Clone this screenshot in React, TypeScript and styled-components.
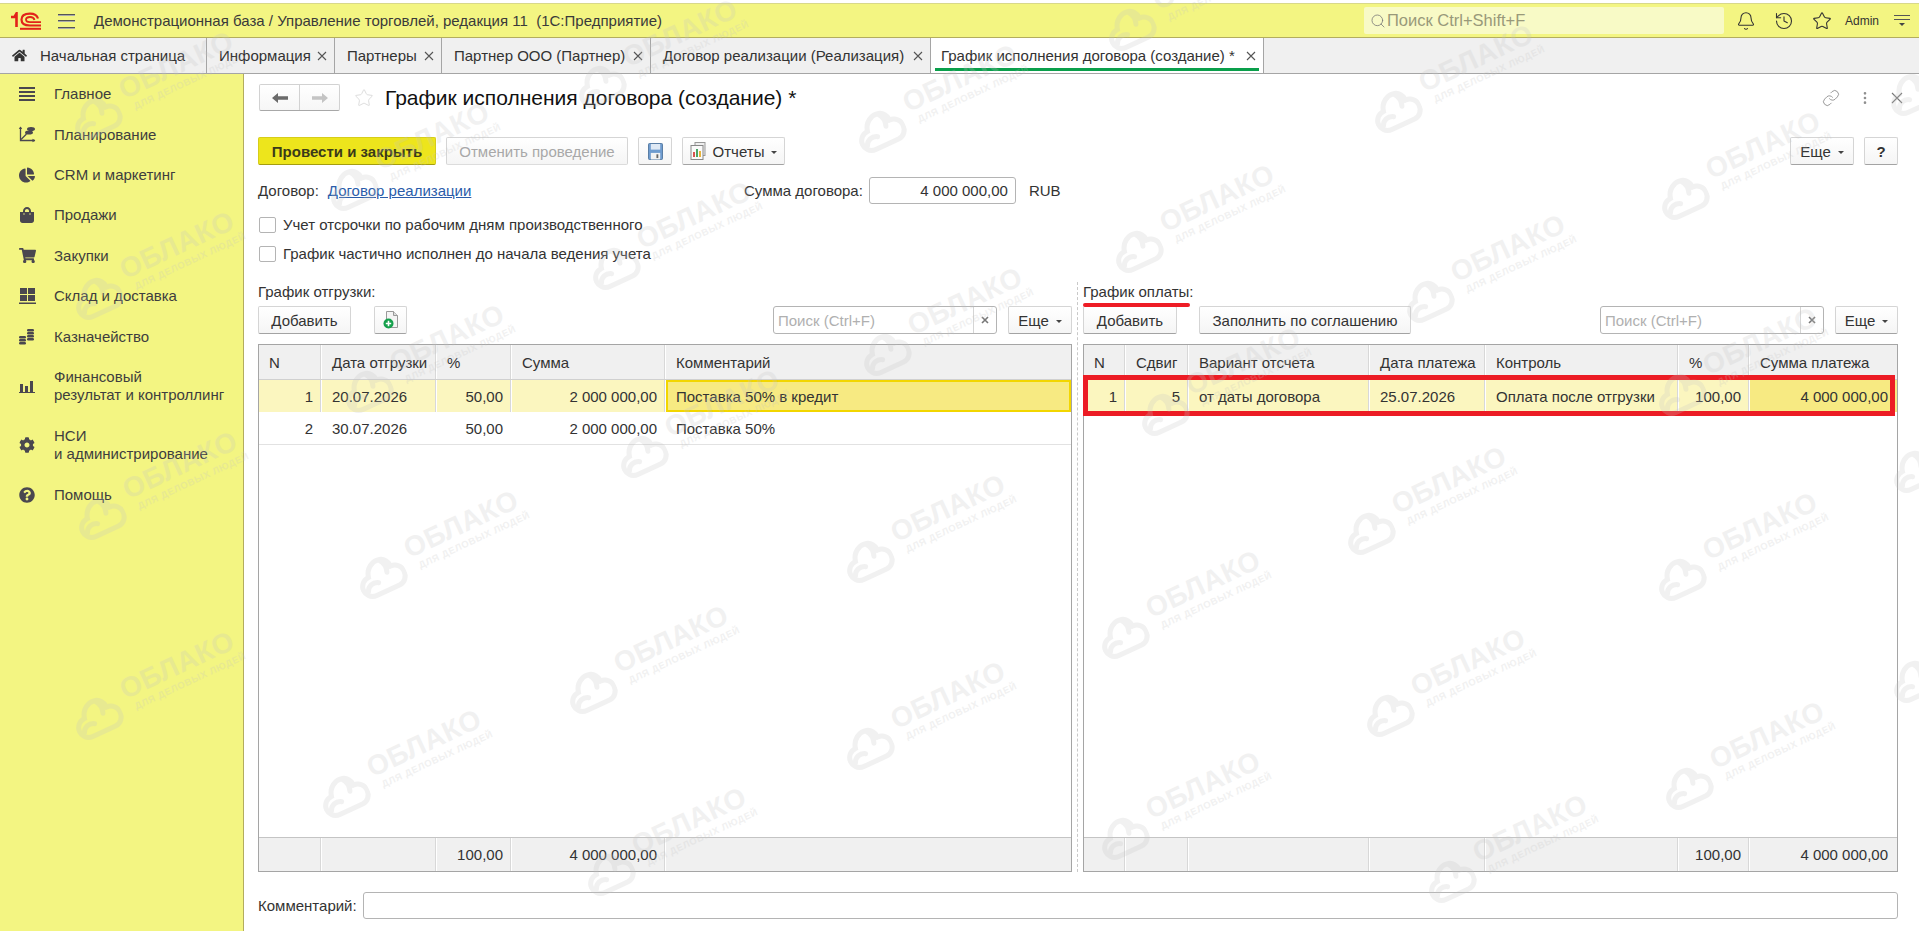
import React from "react";
import styled, { createGlobalStyle } from "styled-components";
import {
  Bell,
  EllipsisVertical,
  History,
  Link as LinkIcon,
  Search,
  Star,
} from "lucide-react";
import {
  FaChartPie,
  FaCog,
  FaHome,
  FaQuestionCircle,
  FaShoppingBag,
  FaShoppingCart,
} from "react-icons/fa";

const GlobalStyle = createGlobalStyle`
  html, body {
    margin: 0;
    padding: 0;
    background: #fff;
  }
  * {
    box-sizing: border-box;
  }
`;

const Page = styled.div`
  position: relative;
  width: 1919px;
  height: 931px;
  overflow: hidden;
  display: flex;
  flex-direction: column;
  background: #fff;
  color: #333;
  font-family: "Liberation Sans", Arial, sans-serif;
  font-size: 15px;
`;

const Header = styled.header`
  margin-top: 3px;
  height: 35px;
  flex: none;
  display: flex;
  align-items: center;
  background: #f3f582;
  border-top: 1px solid #d8d88a;
  border-bottom: 1px solid #b3ad5e;
  padding-right: 8px;
`;

const LogoBox = styled.div`
  width: 30px;
  height: 18px;
  margin-left: 11px;
  display: flex;
`;

const HeaderMenu = styled.div`
  width: 17px;
  height: 14px;
  margin-left: 17px;
  display: flex;
  flex-direction: column;
  justify-content: space-between;
`;

const HeaderMenuLine = styled.span`
  height: 1px;
  background: #555;
  box-shadow: 0 1px 0 #aaa;
`;

const HeaderTitle = styled.div`
  margin-left: 19px;
  color: #3a3a3a;
  white-space: pre;
`;

const GlobalSearch = styled.div`
  width: 360px;
  height: 27px;
  margin-left: auto;
  margin-right: 3px;
  display: flex;
  align-items: center;
  gap: 1px;
  padding-left: 6px;
  background: #f8fac6;
  border-radius: 2px;
  color: #99997a;
  font-size: 16.5px;
`;

const HeaderIcon = styled.div`
  width: 38px;
  display: flex;
  justify-content: center;
  color: #333;
`;

const AdminName = styled.div`
  margin-left: 4px;
  width: 48px;
  font-size: 12px;
  color: #333;
`;

const SectionsIcon = styled.div`
  width: 18px;
  display: flex;
  flex-direction: column;
  align-items: center;
  gap: 3px;
`;

const SectionsLine = styled.span`
  width: 16px;
  height: 1px;
  background: #555;
`;

const SectionsArrow = styled.span`
  border-left: 3px solid transparent;
  border-right: 3px solid transparent;
  border-top: 3px solid #444;
`;

const TabBar = styled.nav`
  height: 36px;
  flex: none;
  display: flex;
  background: #f0f0f0;
  border-bottom: 1px solid #a5a5a5;
`;

const Tab = styled.div<{ $width: number; $active?: boolean }>`
  position: relative;
  width: ${(p) => p.$width}px;
  display: flex;
  align-items: center;
  justify-content: space-between;
  padding: 0 6px 0 ${(p) => (p.$active ? 10 : 12)}px;
  border-right: 1px solid #a5a5a5;
  background: ${(p) => (p.$active ? "#fff" : "transparent")};
  white-space: pre;
  ${(p) =>
    p.$active &&
    `&::after {
      content: "";
      position: absolute;
      left: 4px;
      right: 4px;
      bottom: 2px;
      height: 3px;
      background: #0a9f4b;
    }`}
`;

const HomeLabel = styled.div`
  display: flex;
  align-items: center;
  gap: 13px;
`;

const Body = styled.div`
  flex: 1;
  min-height: 0;
  display: flex;
`;

const Sidebar = styled.aside`
  width: 244px;
  flex: none;
  background: #f3f582;
  border-right: 1px solid #b3ad5e;
`;

const SideItem = styled.div<{ $tall?: boolean }>`
  height: ${(p) => (p.$tall ? 59 : 40.4)}px;
  display: flex;
  align-items: center;
  padding-left: 17px;
  gap: 17px;
  line-height: 18px;
  color: #3e3e3e;
`;

const SideIcon = styled.div`
  width: 20px;
  display: flex;
  justify-content: center;
  color: #4a474f;
`;

const Main = styled.main`
  flex: 1;
  min-width: 0;
  padding: 10px 21px 0 14px;
  display: flex;
  flex-direction: column;
`;

const TitleRow = styled.div`
  height: 27px;
  display: flex;
  align-items: center;
`;

const NavGroup = styled.div`
  width: 81px;
  height: 27px;
  margin-left: 1px;
  display: flex;
  border: 1px solid #d2d2d2;
  border-bottom-color: #a8a8a8;
  border-radius: 2px;
  background: linear-gradient(#fff, #f6f6f6);
`;

const NavButton = styled.div<{ $first?: boolean }>`
  flex: 1;
  display: flex;
  align-items: center;
  justify-content: center;
  border-right: ${(p) => (p.$first ? "1px solid #d2d2d2" : "none")};
  color: ${(p) => (p.$first ? "#6b6b6b" : "#c4c4c4")};
`;

const TitleStar = styled.div`
  width: 20px;
  margin-left: 14px;
  display: flex;
  color: #dedede;
`;

const FormTitle = styled.h1`
  margin: 0 0 0 11px;
  font-size: 21px;
  font-weight: 400;
  color: #111;
`;

const TitleActions = styled.div`
  margin-left: auto;
  margin-right: -6px;
  display: flex;
  align-items: center;
  gap: 17px;
  color: #8f8f8f;
`;

const CommandBar = styled.div`
  height: 28px;
  margin-top: 26px;
  display: flex;
  align-items: stretch;
  gap: 10px;
`;

const Button = styled.div<{ $width: number; $disabled?: boolean }>`
  width: ${(p) => p.$width}px;
  height: 28px;
  flex: none;
  display: flex;
  align-items: center;
  justify-content: center;
  gap: 5px;
  border: 1px solid #d5d5d5;
  border-bottom-color: ${(p) => (p.$disabled ? "#dcdcdc" : "#a3a3a3")};
  border-radius: 2px;
  background: linear-gradient(#fff, #f5f5f5);
  color: ${(p) => (p.$disabled ? "#a8a8a8" : "#333")};
  white-space: pre;
`;

const PrimaryButton = styled(Button)`
  background: #ede51c;
  border-color: #d6cd1a;
  border-bottom-color: #a49d10;
  font-weight: 700;
  color: #3a3a1a;
`;

const Caret = styled.span`
  margin-left: 2px;
  margin-top: 2px;
  border-left: 3px solid transparent;
  border-right: 3px solid transparent;
  border-top: 3px solid #444;
`;

const Spacer = styled.div`
  flex: 1;
`;

const FormRow = styled.div`
  height: 27px;
  margin-top: 12px;
  display: grid;
  grid-template-columns: 486px 1fr;
  align-items: center;
`;

const FieldGroup = styled.div`
  display: flex;
  align-items: center;
  gap: 6px;
`;

const DocLink = styled.a`
  color: #2a5caa;
  text-decoration: underline;
  margin-left: 3px;
`;

const TextBox = styled.div<{ $width?: number }>`
  width: ${(p) => (p.$width ? `${p.$width}px` : "auto")};
  flex: ${(p) => (p.$width ? "none" : 1)};
  height: 27px;
  display: flex;
  align-items: center;
  justify-content: flex-end;
  padding: 0 7px;
  border: 1px solid #b4b4b4;
  border-radius: 3px;
  background: #fff;
`;

const Currency = styled.span`
  margin-left: 7px;
`;

const CheckGroup = styled.div`
  margin-top: 6px;
  margin-bottom: 1px;
`;

const CheckRow = styled.label`
  height: 29px;
  display: flex;
  align-items: center;
  gap: 7px;
  padding-left: 1px;
`;

const CheckBox = styled.span`
  width: 17px;
  height: 16px;
  border: 1px solid #b4b4b4;
  border-radius: 2px;
  background: #fff;
`;

const Panes = styled.div`
  height: 590px;
  margin-top: 13px;
  display: grid;
  grid-template-columns: 814px 11px 815px;
`;

const Pane = styled.section`
  display: flex;
  flex-direction: column;
  min-width: 0;
`;

const PaneDivider = styled.div`
  width: 6px;
  border-right: 1px dashed #c9c9c9;
`;

const PaneTitle = styled.div<{ $marked?: boolean }>`
  position: relative;
  height: 24px;
  padding-top: 2px;
  line-height: 16px;
  ${(p) =>
    p.$marked &&
    `&::after {
      content: "";
      position: absolute;
      left: 0;
      top: 21px;
      width: 107px;
      height: 4px;
      border-radius: 2px;
      background: #ee1c25;
    }`}
`;

const PaneBar = styled.div`
  height: 28px;
  flex: none;
  display: flex;
  align-items: stretch;
`;

const IconButton = styled(Button)`
  margin-left: 23px;
`;

const FillButton = styled(Button)`
  margin-left: 22px;
`;

const MoreButton = styled(Button)`
  margin-left: 11px;
`;

const SearchBox = styled.div`
  width: 224px;
  display: flex;
  border: 1px solid #b4b4b4;
  border-radius: 3px;
  background: #fff;
`;

const SearchHint = styled.div`
  flex: 1;
  padding-left: 4px;
  display: flex;
  align-items: center;
  color: #b0b0b0;
`;

const SearchClear = styled.div`
  width: 23px;
  display: flex;
  align-items: center;
  justify-content: center;
  border-left: 1px solid #d5d5d5;
`;

const Table = styled.div`
  position: relative;
  flex: 1;
  margin-top: 10px;
  display: flex;
  flex-direction: column;
  border: 1px solid #a5a5a5;
  min-height: 0;
`;

const rowHeights = { head: 35, current: 33, data: 32, foot: 34 };

const Row = styled.div<{ $columns: string; $kind: "head" | "data" | "current" | "foot" }>`
  display: grid;
  flex: none;
  grid-template-columns: ${(p) => p.$columns};
  height: ${(p) => rowHeights[p.$kind]}px;
  background: ${(p) =>
    p.$kind === "current"
      ? "#fbf6bf"
      : p.$kind === "data"
        ? "transparent"
        : "#f0f0f0"};
  border-top: ${(p) => (p.$kind === "foot" ? "1px solid #c4c4c4" : "none")};
  border-bottom: ${(p) =>
    p.$kind === "head"
      ? "1px solid #d0d0d0"
      : p.$kind === "data"
        ? "1px solid #e2e2e2"
        : p.$kind === "current"
          ? "1px solid #fff"
          : "none"};
`;

const Cell = styled.div<{ $right?: boolean; $line?: boolean }>`
  display: flex;
  align-items: center;
  justify-content: ${(p) => (p.$right ? "flex-end" : "flex-start")};
  padding: 0 8px 0 10px;
  white-space: pre;
  overflow: hidden;
  border-right: ${(p) => (p.$line ? "1px solid #fff" : "1px solid transparent")};
  ${(p) => p.$line && "box-shadow: inset -2px 0 0 -1px #d8d8d8;"}
`;

const CurrentCell = styled(Cell)`
  background: #f7ea82;
`;

const FocusCell = styled(CurrentCell)`
  padding: 0 6px 0 8px;
  border: 2px solid #f2d600;
`;

const TableFill = styled.div`
  flex: 1;
`;

const RedFrame = styled.div`
  position: absolute;
  left: -1px;
  top: 30px;
  width: 812px;
  height: 41px;
  border: 5px solid #ec1c24;
  pointer-events: none;
`;

const CommentRow = styled.div`
  height: 27px;
  margin-top: 20px;
  display: flex;
  align-items: center;
  gap: 6px;
`;

const WatermarkLayer = styled.div`
  position: absolute;
  inset: 0;
  pointer-events: none;
  overflow: hidden;
`;

const WatermarkItem = styled.div`
  position: absolute;
  display: flex;
  align-items: center;
  gap: 8px;
  transform-origin: 25px 50%;
  transform: translate(-25px, -50%) rotate(-25deg);
  color: #c4c4c4;
  opacity: 0.23;
  width: 190px;
`;

const WatermarkText = styled.div`
  display: flex;
  flex-direction: column;
  margin-top: -16px;
  font-weight: 700;
`;

const WatermarkName = styled.span`
  font-size: 28px;
  line-height: 28px;
  letter-spacing: 0.5px;
`;

const WatermarkNote = styled.span`
  font-size: 9.5px;
  line-height: 11px;
  letter-spacing: 0.6px;
  padding-left: 6px;
  white-space: nowrap;
`;

const CloseGlyph = () => (
  <svg width="12" height="12" viewBox="0 0 12 12" fill="none" stroke="#555" strokeWidth="1.1">
    <path d="M2 2l8 8M10 2l-8 8" />
  </svg>
);

const CloseGlyphLarge = () => (
  <svg width="14" height="14" viewBox="0 0 14 14" fill="none" stroke="#777" strokeWidth="1.1">
    <path d="M2 2l10 10M12 2L2 12" />
  </svg>
);

const TinyClose = () => (
  <svg width="8" height="8" viewBox="0 0 8 8" fill="none" stroke="#777" strokeWidth="1.6">
    <path d="M1 1l6 6M7 1l-6 6" />
  </svg>
);

const NavArrow = ({ flip }: { flip?: boolean }) => (
  <svg
    width="16"
    height="12"
    viewBox="0 0 16 12"
    fill="currentColor"
    style={flip ? { transform: "scaleX(-1)" } : undefined}
  >
    <path d="M0 6l6-5v3.300h10v3.400H6V11z" />
  </svg>
);

const Logo = () => (
  <svg width="30" height="18" viewBox="0 0 30 18" fill="none" stroke="#e2231a">
    <path d="M0 5h3.500l2-3.500V15" strokeWidth="2.600" />
    <path d="M27 6.500C26 3 23 1.600 19 1.600 13.500 1.600 10.500 3.800 10.500 7.500s3 6 8.500 6h11" strokeWidth="2.200" />
    <path d="M23.500 8C23 6 21.500 5 19 5s-4 1-4 2.600S16.500 10.200 19 10.200h11" strokeWidth="1.800" />
    <path d="M9 16.800h21" strokeWidth="2" />
  </svg>
);

const LinesIcon = () => (
  <svg width="16" height="14" viewBox="0 0 16 14" fill="#4a474f">
    <rect y="0" width="16" height="2" />
    <rect y="4" width="16" height="2" />
    <rect y="8" width="16" height="2" />
    <rect y="12" width="16" height="2" />
  </svg>
);

const PlanIcon = () => (
  <svg width="18" height="17" viewBox="0 0 18 17" fill="#4a474f">
    <path d="M2.500 1v13.500H17" fill="none" stroke="#4a474f" strokeWidth="1.300" />
    <path d="M0.800 3l1.700-2.500L4.200 3zM14.500 12.800l2.800 1.700-2.800 1.700z" />
    <path d="M3 13.500L8.500 8" stroke="#4a474f" strokeWidth="1.300" />
    <ellipse cx="13" cy="3" rx="4" ry="2" />
    <ellipse cx="11" cy="6.500" rx="4" ry="2" />
  </svg>
);

const StockIcon = () => (
  <svg width="17" height="16" viewBox="0 0 17 16" fill="#4a474f">
    <rect x="1" y="0" width="7" height="6" />
    <rect x="9" y="0" width="7" height="6" />
    <rect x="1" y="7" width="7" height="6" />
    <rect x="9" y="7" width="7" height="6" />
    <rect x="0" y="14.500" width="17" height="1.500" />
  </svg>
);

const CoinsIcon = () => (
  <svg width="16" height="16" viewBox="0 0 16 16" fill="#4a474f">
    <rect x="8" y="0" width="7" height="2.400" rx="1.200" />
    <rect x="8" y="3" width="7" height="2.400" rx="1.200" />
    <rect x="8" y="6" width="7" height="2.400" rx="1.200" />
    <rect x="8" y="9" width="7" height="2.400" rx="1.200" />
    <rect x="0" y="7" width="7" height="2.400" rx="1.200" />
    <rect x="0" y="10" width="7" height="2.400" rx="1.200" />
    <rect x="0" y="13" width="7" height="2.400" rx="1.200" />
  </svg>
);

const BarsIcon = () => (
  <svg width="16" height="13" viewBox="0 0 16 13" fill="#4a474f">
    <rect x="1" y="4" width="3" height="8" />
    <rect x="6" y="6" width="3" height="6" />
    <rect x="11" y="1" width="3" height="11" />
    <rect x="0" y="12" width="16" height="1" />
  </svg>
);

const SaveIcon = () => (
  <svg width="15" height="17" viewBox="0 0 16 18">
    <rect x="0.500" y="0.500" width="15" height="17" rx="1" fill="#6f9ccf" stroke="#52789f" />
    <rect x="3" y="1" width="10" height="6" fill="#dfe9f4" />
    <rect x="3" y="10.500" width="10" height="7" fill="#f3f3f3" />
    <rect x="9" y="12" width="2" height="4" fill="#666" />
  </svg>
);

const ReportsIcon = () => (
  <svg width="18" height="18" viewBox="0 0 18 18">
    <rect x="5" y="0.500" width="10" height="13" fill="#eee" stroke="#999" />
    <rect x="1" y="3.500" width="12" height="14" fill="#fafafa" stroke="#888" />
    <rect x="3" y="10" width="2" height="5" fill="#d9534f" />
    <rect x="6" y="7" width="2" height="8" fill="#4aa564" />
    <rect x="9" y="9" width="2" height="6" fill="#e8b33c" />
  </svg>
);

const AddDocIcon = () => (
  <svg width="16" height="18" viewBox="0 0 16 18">
    <path d="M3.500 0.500h7l4 4v12h-11z" fill="#f4f4f4" stroke="#999" />
    <path d="M10.500 0.500v4h4" fill="#ddd" stroke="#999" />
    <circle cx="5.500" cy="12.500" r="5" fill="#14a04b" />
    <path d="M5.500 9.800v5.400M2.800 12.500h5.400" stroke="#fff" strokeWidth="1.600" />
  </svg>
);

const CloudIcon = () => (
  <svg width="50" height="42" viewBox="0 0 50 42" fill="none" stroke="currentColor" strokeWidth="5" strokeLinecap="round">
    <path d="M13 37C6 37 3 31 3 27c0-6 5-10 10-10C15 8 23 4 29 5c6 1 9 6 9 11 6 0 10 5 10 10 0 6-4 11-10 11ZM7 30c2-5 8-7 13-4M30 6c3 4 4 9 2 14" />
  </svg>
);

const navItems: { label: React.ReactNode; icon: React.ReactNode; tall?: boolean }[] = [
  { label: "Главное", icon: <LinesIcon /> },
  { label: "Планирование", icon: <PlanIcon /> },
  { label: "CRM и маркетинг", icon: <FaChartPie size={16} /> },
  { label: "Продажи", icon: <FaShoppingBag size={16} /> },
  { label: "Закупки", icon: <FaShoppingCart size={17} /> },
  { label: "Склад и доставка", icon: <StockIcon /> },
  { label: "Казначейство", icon: <CoinsIcon /> },
  {
    label: (
      <>
        Финансовый
        <br />
        результат и контроллинг
      </>
    ),
    icon: <BarsIcon />,
    tall: true,
  },
  {
    label: (
      <>
        НСИ
        <br />и администрирование
      </>
    ),
    icon: <FaCog size={16} />,
    tall: true,
  },
  { label: "Помощь", icon: <FaQuestionCircle size={16} /> },
];

const tabs = [
  { label: "Информация", width: 128 },
  { label: "Партнеры", width: 107 },
  { label: "Партнер ООО (Партнер)", width: 209 },
  { label: "Договор реализации (Реализация)", width: 280 },
];

const shipColumns = "63px 115px 75px 154px 1fr";
const payColumns = "42px 63px 181px 116px 193px 71px 1fr";

const clouds = [
  [96, 117], [97, 297], [100, 517], [97, 717], [600, 85], [880, 130], [352, 188],
  [614, 267], [367, 390], [642, 455], [885, 353], [381, 576], [868, 560], [591, 691],
  [344, 795], [868, 747], [609, 873], [1123, 636], [1123, 837], [1163, 413], [1137, 250],
  [1130, 28], [1396, 110], [1428, 300], [1369, 532], [1388, 714], [1450, 880], [1683, 197],
  [1680, 393], [1680, 578], [1687, 787], [1912, 93], [1915, 470], [1915, 680],
];

export default function App() {
  return (
    <Page>
      <GlobalStyle />
      <Header>
        <LogoBox>
          <Logo />
        </LogoBox>
        <HeaderMenu>
          <HeaderMenuLine />
          <HeaderMenuLine />
          <HeaderMenuLine />
        </HeaderMenu>
        <HeaderTitle>Демонстрационная база / Управление торговлей, редакция 11  (1С:Предприятие)</HeaderTitle>
        <GlobalSearch>
          <Search size={16} strokeWidth={1.2} color="#777" />
          Поиск Ctrl+Shift+F
        </GlobalSearch>
        <HeaderIcon>
          <Bell size={20} strokeWidth={1.3} />
        </HeaderIcon>
        <HeaderIcon>
          <History size={20} strokeWidth={1.3} />
        </HeaderIcon>
        <HeaderIcon>
          <Star size={20} strokeWidth={1.3} />
        </HeaderIcon>
        <AdminName>Admin</AdminName>
        <SectionsIcon>
          <SectionsLine />
          <SectionsLine />
          <SectionsArrow />
        </SectionsIcon>
      </Header>

      <TabBar>
        <Tab $width={207}>
          <HomeLabel>
            <FaHome size={15} color="#333" />
            Начальная страница
          </HomeLabel>
        </Tab>
        {tabs.map((tab) => (
          <Tab key={tab.label} $width={tab.width}>
            {tab.label}
            <CloseGlyph />
          </Tab>
        ))}
        <Tab $width={333} $active>
          График исполнения договора (создание) *
          <CloseGlyph />
        </Tab>
      </TabBar>

      <Body>
        <Sidebar>
          {navItems.map((item, i) => (
            <SideItem key={i} $tall={item.tall}>
              <SideIcon>{item.icon}</SideIcon>
              <div>{item.label}</div>
            </SideItem>
          ))}
        </Sidebar>

        <Main>
          <TitleRow>
            <NavGroup>
              <NavButton $first>
                <NavArrow />
              </NavButton>
              <NavButton>
                <NavArrow flip />
              </NavButton>
            </NavGroup>
            <TitleStar>
              <Star size={20} strokeWidth={1.2} />
            </TitleStar>
            <FormTitle>График исполнения договора (создание) *</FormTitle>
            <TitleActions>
              <LinkIcon size={18} strokeWidth={1.2} />
              <EllipsisVertical size={16} strokeWidth={2} />
              <CloseGlyphLarge />
            </TitleActions>
          </TitleRow>

          <CommandBar>
            <PrimaryButton $width={178}>Провести и закрыть</PrimaryButton>
            <Button $width={182} $disabled>
              Отменить проведение
            </Button>
            <Button $width={34}>
              <SaveIcon />
            </Button>
            <Button $width={103}>
              <ReportsIcon />
              Отчеты
              <Caret />
            </Button>
            <Spacer />
            <Button $width={64}>
              Еще
              <Caret />
            </Button>
            <Button $width={34}>
              <b>?</b>
            </Button>
          </CommandBar>

          <FormRow>
            <FieldGroup>
              Договор:
              <DocLink>Договор реализации</DocLink>
            </FieldGroup>
            <FieldGroup>
              Сумма договора:
              <TextBox $width={147}>4 000 000,00</TextBox>
              <Currency>RUB</Currency>
            </FieldGroup>
          </FormRow>

          <CheckGroup>
            <CheckRow>
              <CheckBox />
              Учет отсрочки по рабочим дням производственного
            </CheckRow>
            <CheckRow>
              <CheckBox />
              График частично исполнен до начала ведения учета
            </CheckRow>
          </CheckGroup>

          <Panes>
            <Pane>
              <PaneTitle>График отгрузки:</PaneTitle>
              <PaneBar>
                <Button $width={93}>Добавить</Button>
                <IconButton $width={33}>
                  <AddDocIcon />
                </IconButton>
                <Spacer />
                <SearchBox>
                  <SearchHint>Поиск (Ctrl+F)</SearchHint>
                  <SearchClear>
                    <TinyClose />
                  </SearchClear>
                </SearchBox>
                <MoreButton $width={64}>
                  Еще
                  <Caret />
                </MoreButton>
              </PaneBar>
              <Table>
                <Row $columns={shipColumns} $kind="head">
                  <Cell $line>N</Cell>
                  <Cell $line>Дата отгрузки</Cell>
                  <Cell $line>%</Cell>
                  <Cell $line>Сумма</Cell>
                  <Cell>Комментарий</Cell>
                </Row>
                <Row $columns={shipColumns} $kind="current">
                  <Cell $right $line>1</Cell>
                  <Cell $line>20.07.2026</Cell>
                  <Cell $right $line>50,00</Cell>
                  <Cell $right $line>2 000 000,00</Cell>
                  <FocusCell>Поставка 50% в кредит</FocusCell>
                </Row>
                <Row $columns={shipColumns} $kind="data">
                  <Cell $right>2</Cell>
                  <Cell>30.07.2026</Cell>
                  <Cell $right>50,00</Cell>
                  <Cell $right>2 000 000,00</Cell>
                  <Cell>Поставка 50%</Cell>
                </Row>
                <TableFill />
                <Row $columns={shipColumns} $kind="foot">
                  <Cell $line />
                  <Cell $line />
                  <Cell $right $line>100,00</Cell>
                  <Cell $right $line>4 000 000,00</Cell>
                  <Cell />
                </Row>
              </Table>
            </Pane>

            <PaneDivider />

            <Pane>
              <PaneTitle $marked>График оплаты:</PaneTitle>
              <PaneBar>
                <Button $width={94}>Добавить</Button>
                <FillButton $width={212}>Заполнить по соглашению</FillButton>
                <Spacer />
                <SearchBox>
                  <SearchHint>Поиск (Ctrl+F)</SearchHint>
                  <SearchClear>
                    <TinyClose />
                  </SearchClear>
                </SearchBox>
                <MoreButton $width={63}>
                  Еще
                  <Caret />
                </MoreButton>
              </PaneBar>
              <Table>
                <Row $columns={payColumns} $kind="head">
                  <Cell $line>N</Cell>
                  <Cell $line>Сдвиг</Cell>
                  <Cell $line>Вариант отсчета</Cell>
                  <Cell $line>Дата платежа</Cell>
                  <Cell $line>Контроль</Cell>
                  <Cell $line>%</Cell>
                  <Cell>Сумма платежа</Cell>
                </Row>
                <Row $columns={payColumns} $kind="current">
                  <Cell $right $line>1</Cell>
                  <Cell $right $line>5</Cell>
                  <Cell $line>от даты договора</Cell>
                  <Cell $line>25.07.2026</Cell>
                  <Cell $line>Оплата после отгрузки</Cell>
                  <Cell $right $line>100,00</Cell>
                  <CurrentCell $right>4 000 000,00</CurrentCell>
                </Row>
                <TableFill />
                <Row $columns={payColumns} $kind="foot">
                  <Cell $line />
                  <Cell $line />
                  <Cell $line />
                  <Cell $line />
                  <Cell $line />
                  <Cell $right $line>100,00</Cell>
                  <Cell $right>4 000 000,00</Cell>
                </Row>
                <RedFrame />
              </Table>
            </Pane>
          </Panes>

          <CommentRow>
            Комментарий:
            <TextBox />
          </CommentRow>
        </Main>
      </Body>

      <WatermarkLayer>
        {clouds.map(([x, y]) => (
          <WatermarkItem key={`${x}-${y}`} style={{ left: x, top: y }}>
            <CloudIcon />
            <WatermarkText>
              <WatermarkName>ОБЛАКО</WatermarkName>
              <WatermarkNote>ДЛЯ ДЕЛОВЫХ ЛЮДЕЙ</WatermarkNote>
            </WatermarkText>
          </WatermarkItem>
        ))}
      </WatermarkLayer>
    </Page>
  );
}
